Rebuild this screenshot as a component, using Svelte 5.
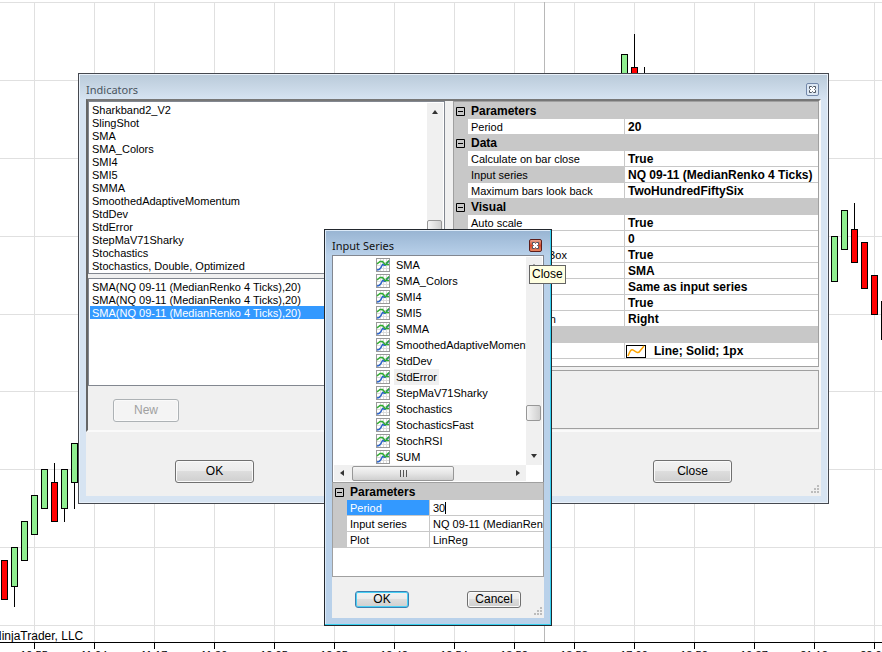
<script lang="ts">
  type Row = { name: string; value?: string; category?: boolean; selected?: boolean; plot?: boolean; edit?: boolean };
  type Candle = { x: number; high: number; top: number; bottom: number; low: number; up: boolean };

  const available = [
    'Sharkband2_V2', 'SlingShot', 'SMA', 'SMA_Colors', 'SMI4', 'SMI5', 'SMMA',
    'SmoothedAdaptiveMomentum', 'StdDev', 'StdError', 'StepMaV71Sharky',
    'Stochastics', 'Stochastics, Double, Optimized'
  ];

  const series = [
    'SMA', 'SMA_Colors', 'SMI4', 'SMI5', 'SMMA', 'SmoothedAdaptiveMomentum', 'StdDev',
    'StdError', 'StepMaV71Sharky', 'Stochastics', 'StochasticsFast', 'StochRSI', 'SUM'
  ];

  const applied = Array(3).fill('SMA(NQ 09-11 (MedianRenko 4 Ticks),20)');

  const indicatorProps: Row[] = [
    { name: 'Parameters', category: true },
    { name: 'Period', value: '20' },
    { name: 'Data', category: true },
    { name: 'Calculate on bar close', value: 'True' },
    { name: 'Input series', value: 'NQ 09-11 (MedianRenko 4 Ticks)', selected: true },
    { name: 'Maximum bars look back', value: 'TwoHundredFiftySix' },
    { name: 'Visual', category: true },
    { name: 'Auto scale', value: 'True' },
    { name: 'Displacement', value: '0' },
    { name: 'Display in Data Box', value: 'True' },
    { name: 'Label', value: 'SMA' },
    { name: 'Panel', value: 'Same as input series' },
    { name: 'Price marker(s)', value: 'True' },
    { name: 'Scale justification', value: 'Right' },
    { name: 'Plots', category: true },
    { name: 'SMA', value: 'Line; Solid; 1px', plot: true }
  ];

  const seriesProps: Row[] = [
    { name: 'Parameters', category: true },
    { name: 'Period', value: '30', selected: true, edit: true },
    { name: 'Input series', value: 'NQ 09-11 (MedianRenko 4 Ticks)' },
    { name: 'Plot', value: 'LinReg' }
  ];

  const times = [
    '10:55', '11:04', '11:17', '11:30', '12:05', '12:25', '12:42', '12:54',
    '13:52', '13:58', '17:00', '18:52', '19:37', '21:12', '22:05'
  ];

  const gridLines = [2, 80, 158, 236, 314, 391, 469, 547, 625];

  const candles: Candle[] = [
    { x: 4, high: 560, top: 560, bottom: 599, low: 599, up: false },
    { x: 14, high: 547, top: 547, bottom: 586, low: 606, up: true },
    { x: 24, high: 521, top: 521, bottom: 560, low: 560, up: true },
    { x: 34, high: 495, top: 495, bottom: 534, low: 534, up: true },
    { x: 44, high: 469, top: 469, bottom: 508, low: 508, up: true },
    { x: 54, high: 463, top: 482, bottom: 521, low: 521, up: false },
    { x: 64, high: 469, top: 469, bottom: 508, low: 521, up: true },
    { x: 74, high: 443, top: 443, bottom: 482, low: 508, up: true },
    { x: 624, high: 54, top: 54, bottom: 93, low: 93, up: true },
    { x: 634, high: 34, top: 67, bottom: 106, low: 106, up: false },
    { x: 644, high: 67, top: 80, bottom: 119, low: 119, up: false },
    { x: 834, high: 236, top: 236, bottom: 281, low: 281, up: true },
    { x: 844, high: 210, top: 210, bottom: 249, low: 249, up: true },
    { x: 854, high: 203, top: 229, bottom: 262, low: 262, up: false },
    { x: 864, high: 242, top: 242, bottom: 288, low: 288, up: false },
    { x: 874, high: 275, top: 275, bottom: 314, low: 314, up: false }
  ];

  let selectedApplied = $state(2);
  let selectedSeries = $state(7);
  let period = $state('30');
</script>

{#snippet closeIcon()}
  <svg width="9" height="9" viewBox="0 0 9 9" aria-hidden="true">
    <path
      d="M1.5 1.5h2l1 1l1-1h2v2l-1 1l1 1v2h-2l-1-1l-1 1h-2v-2l1-1l-1-1z"
      fill="#fff"
      stroke="#4b535e"
    />
  </svg>
{/snippet}

{#snippet grip()}
  <svg class="grip" width="9" height="9" viewBox="0 0 9 9" aria-hidden="true">
    <path d="M7 0h2v2h-2zM4 3h2v2h-2zM7 3h2v2h-2zM1 6h2v2h-2zM4 6h2v2h-2zM7 6h2v2h-2z" fill="#bcbcbc" />
  </svg>
{/snippet}

{#snippet seriesIcon()}
  <svg width="14" height="14" viewBox="0 0 14 14" aria-hidden="true">
    <rect x="0.5" y="0.5" width="13" height="13" fill="#fff" stroke="#999" />
    <path d="M4.5 1v12M7.5 1v12M10.5 1v12M1 4.5h12M1 7.5h12M1 10.5h12" stroke="#dcdcdc" />
    <path d="M1 12L3 11.5L5 9.5L6.5 6.5L9 7.5L13 3" fill="none" stroke="#2a62c9" stroke-width="1.4" />
    <path d="M1 6L4 3.5L6.5 3.5L9 6.5L13 6.5" fill="none" stroke="#2fae2f" stroke-width="1.4" />
    <path d="M10 5.5L13 2.5" stroke="#2fae2f" stroke-width="1.2" />
  </svg>
{/snippet}

{#snippet propertyGrid(rows: Row[])}
  <table>
    <colgroup><col class="gutter-col" /><col class="name-col" /><col /></colgroup>
    <tbody>
      {#each rows as row}
        {#if row.category}
          <tr class="category">
            <td class="gutter">
              <button class="expander" aria-label="Collapse {row.name}">
                <svg width="9" height="9" viewBox="0 0 9 9" aria-hidden="true">
                  <path d="M0.5 0.5h8v8h-8zM2 4.5h5" fill="none" stroke="#000" />
                </svg>
              </button>
            </td>
            <th colspan="2">{row.name}</th>
          </tr>
        {:else}
          <tr class:selected={row.selected}>
            <td class="gutter"></td>
            <td class="name">{row.name}</td>
            <td class="value">
              {#if row.edit}
                <div class="edit">
                  <input aria-label={row.name} bind:value={period} />
                  <span class="caret"></span>
                </div>
              {:else if row.plot}
                <div class="plot">
                  <svg width="20" height="13" viewBox="0 0 20 13" aria-hidden="true">
                    <rect x="0.5" y="0.5" width="19" height="12" fill="#fff" stroke="#000" />
                    <path d="M2 11C4 6 5 4 7 5C10 7 12 9 14 6L18 1" fill="none" stroke="#ffa500" stroke-width="1.5" />
                  </svg>
                  {row.value}
                </div>
              {:else}
                {row.value}
              {/if}
            </td>
          </tr>
        {/if}
      {/each}
    </tbody>
  </table>
{/snippet}

<main class="desktop">
  <!-- Chart -->
  <svg class="chart" width="100%" height="100%" shape-rendering="crispEdges">
    {#each gridLines as y}
      <line x1="0" x2="100%" y1={y + 0.5} y2={y + 0.5} stroke="#e0e0e0" />
    {/each}
    {#each times as _, i}
      <line x1={34.5 + i * 60} x2={34.5 + i * 60} y1="2" y2="642" stroke="#e0e0e0" />
    {/each}
    <line x1="544.5" x2="544.5" y1="2" y2="642" stroke="#b8b8b8" />
    {#each candles as c}
      <line x1={c.x + 0.5} x2={c.x + 0.5} y1={c.high} y2={c.low + 1} stroke="#000" />
      <rect
        x={c.x - 2.5}
        y={c.top + 0.5}
        width="6"
        height={c.bottom - c.top}
        fill={c.up ? '#90ee90' : '#ff0000'}
        stroke="#000"
      />
    {/each}
    <line x1="881.5" x2="881.5" y1="301" y2="340" stroke="#000" />
    <line x1="0" x2="100%" y1="642.5" y2="642.5" stroke="#000" />
    {#each times as time, i}
      <line x1={34.5 + i * 60} x2={34.5 + i * 60} y1="642" y2="649" stroke="#000" />
      <text x={34 + i * 60} y="659" text-anchor="middle">{time}</text>
    {/each}
    <text class="copyright" x="-7" y="640">NinjaTrader, LLC</text>
  </svg>

  <!-- Indicators dialog -->
  <section class="window indicators" aria-label="Indicators">
    <header>
      <h2>Indicators</h2>
      <button class="close-box" aria-label="Close">{@render closeIcon()}</button>
    </header>
    <div class="client">
      <div class="panes">
        <div class="left">
          <div class="list-box">
            <ul role="listbox" aria-label="Available indicators">
              {#each available as name}
                <li role="option" aria-selected="false">{name}</li>
              {/each}
            </ul>
            <div class="scroll-v">
              <i class="arrow up"></i>
              <i class="thumb high"></i>
            </div>
          </div>
          <div class="list-box applied">
            <ul role="listbox" aria-label="Applied indicators">
              {#each applied as name, i}
                <li role="option" aria-selected={selectedApplied === i}>{name}</li>
              {/each}
            </ul>
          </div>
          <button class="btn new" disabled>New</button>
        </div>
        <div class="right">
          <div class="props strong">{@render propertyGrid(indicatorProps)}</div>
          <div class="help"></div>
        </div>
      </div>
      <footer>
        <button class="btn">OK</button>
        <button class="btn">Close</button>
      </footer>
      {@render grip()}
    </div>
  </section>

  <!-- Input Series dialog -->
  <section class="window active series" aria-label="Input Series">
    <header>
      <h2>Input Series</h2>
      <button class="close-box" aria-label="Close">{@render closeIcon()}</button>
    </header>
    <div class="client">
      <div class="tree">
        <div class="tree-body">
          <ul role="listbox" aria-label="Series">
            {#each series as name, i}
              <li role="option" aria-selected={selectedSeries === i}>
                {@render seriesIcon()}
                <span>{name}</span>
              </li>
            {/each}
          </ul>
          <div class="scroll-v">
            <i class="arrow up"></i>
            <i class="thumb low"></i>
            <i class="arrow down"></i>
          </div>
        </div>
        <div class="scroll-h">
          <i class="arrow prev"></i>
          <i class="thumb wide"><b></b><b></b><b></b></i>
          <i class="arrow next"></i>
        </div>
      </div>
      <div class="props">{@render propertyGrid(seriesProps)}</div>
      <footer>
        <button class="btn default">OK</button>
        <button class="btn">Cancel</button>
      </footer>
      {@render grip()}
    </div>
  </section>

  <div class="tooltip" role="tooltip">Close</div>
</main>

<style>
  :global(body) {
    background: #fff;
  }

  .desktop {
    position: relative;
    height: 100vh;
    overflow: hidden;
    font-family: 'Liberation Sans', Arial, sans-serif;
    font-size: 11px;
    line-height: 13px;
    color: #000;
  }

  .desktop * {
    box-sizing: border-box;
  }

  .chart {
    display: block;
  }

  .copyright {
    font-size: 12px;
  }

  ul {
    list-style: none;
    margin: 0;
    padding: 0;
    flex: 1;
    min-width: 0;
    overflow: hidden;
  }

  li {
    white-space: nowrap;
  }

  /* Windows */
  .window {
    position: absolute;
    border: 1px solid #45484f;
    padding: 0 7px 7px;
    background: linear-gradient(#b9cad9, #d7e4f2 26px);
    box-shadow: inset 0 0 0 1px #e9f1fa;
  }

  .indicators {
    left: 78px;
    top: 73px;
    width: 751px;
  }

  .series {
    left: 324px;
    top: 229px;
    width: 228px;
  }

  .active {
    border-color: #23282e;
    background: linear-gradient(#98b4d2, #b9d1ea 26px);
    box-shadow: inset -1px -1px 0 #35d0f0, inset 1px 1px 0 #dceaf8;
  }

  header {
    display: flex;
    align-items: center;
    justify-content: space-between;
    height: 25px;
    padding: 6px 2px 0 0;
  }

  h2 {
    margin: 0;
    font-family: 'Noto Sans', sans-serif;
    font-size: 11px;
    font-weight: 400;
    line-height: 16px;
    color: #4a5560;
  }

  .active h2 {
    color: #111;
  }

  .close-box {
    display: flex;
    align-items: center;
    justify-content: center;
    width: 13px;
    height: 13px;
    padding: 0;
    border: 1px solid #7388aa;
    border-radius: 2px;
    background: #dce7f3;
  }

  .active .close-box {
    border-color: #5c1d1a;
    background: linear-gradient(#eaa58f, #d0492c 50%, #e58562);
  }

  .client {
    position: relative;
    background: #f0f0f0;
  }

  .grip {
    position: absolute;
    right: 2px;
    bottom: 2px;
  }

  /* Indicators panes */
  .panes {
    display: flex;
    gap: 8px;
    border: 2px solid #666;
    border-top-color: #777;
    border-right: 2px solid #fafafa;
    border-bottom: 2px solid #fafafa;
  }

  .left {
    display: flex;
    flex-direction: column;
    width: 357px;
  }

  .right {
    display: flex;
    flex: 1;
    flex-direction: column;
    gap: 3px;
    min-width: 0;
    padding-bottom: 1px;
  }

  .list-box {
    display: flex;
    border: 1px solid #828790;
    padding: 1px;
    background: #fff;
  }

  .list-box li {
    height: 13px;
    padding-left: 2px;
    line-height: 15px;
  }

  .applied {
    min-height: 108px;
    margin-top: 4px;
  }

  .list-box li[aria-selected='true'] {
    background: #3399ff;
    color: #fff;
  }

  .help {
    flex: 1;
    border: 1px solid #a0a0a0;
  }

  /* Scroll bars */
  .scroll-v {
    position: relative;
    display: flex;
    flex-direction: column;
    align-items: center;
    justify-content: space-between;
    width: 16px;
    padding: 7px 0;
    background: #f0f0f0;
  }

  .scroll-h {
    display: flex;
    align-items: center;
    gap: 8px;
    height: 16px;
    margin-right: 16px;
    padding: 0 6px;
    background: #f0f0f0;
  }

  .arrow {
    border: 3px solid transparent;
  }

  .up {
    border-top: 0;
    border-bottom: 4px solid #333;
  }

  .down {
    border-bottom: 0;
    border-top: 4px solid #333;
  }

  .prev {
    border-left: 0;
    border-right: 4px solid #333;
  }

  .next {
    margin-left: auto;
    border-right: 0;
    border-left: 4px solid #333;
  }

  .thumb {
    border: 1px solid #979797;
    border-radius: 2px;
    background: linear-gradient(90deg, #f5f5f5, #e2e2e2 50%, #cfcfcf);
  }

  .high,
  .low {
    position: absolute;
    left: 0;
    width: 15px;
    height: 16px;
  }

  .high {
    top: 69%;
    height: 24px;
  }

  .low {
    top: 71%;
  }

  .wide {
    display: flex;
    align-items: center;
    justify-content: center;
    gap: 2px;
    flex: 0 1 102px;
    height: 15px;
    background: linear-gradient(#f5f5f5, #e5e5e5 50%, #cfcfcf);
  }

  .wide b {
    width: 1px;
    height: 7px;
    background: #555;
  }

  /* Property grid */
  .props {
    border: 1px solid #a0a0a0;
    padding-bottom: 7px;
    background: #fff;
  }

  table {
    width: 100%;
    table-layout: fixed;
    border-spacing: 0;
    border-top: 1px solid #c8c8c8;
  }

  .gutter-col {
    width: 14px;
  }

  .name-col {
    width: 157px;
  }

  .series .name-col {
    width: 83px;
  }

  td,
  th {
    height: 16px;
    padding: 0;
    overflow: hidden;
    line-height: 15px;
    white-space: nowrap;
    text-align: left;
  }

  th {
    padding-left: 3px;
    font-size: 12px;
    font-weight: 700;
  }

  .gutter,
  .category th {
    background: #c8c8c8;
  }

  .gutter {
    line-height: 0;
  }

  .expander {
    display: block;
    margin-left: 2px;
    padding: 0;
    border: 0;
    background: none;
  }

  .expander svg {
    display: block;
  }

  .name,
  .value {
    padding-top: 1px;
    padding-left: 3px;
    border-bottom: 1px solid #c8c8c8;
    line-height: 14px;
  }

  .name {
    border-right: 1px solid #c8c8c8;
  }

  .strong .value {
    font-size: 12px;
    font-weight: 700;
  }

  .strong .selected .name {
    background: #c8c8c8;
  }

  .series .selected .name {
    background: #3399ff;
    color: #fff;
  }

  .plot {
    display: flex;
    align-items: center;
    gap: 8px;
    margin-left: -2px;
  }

  .edit {
    display: flex;
    align-items: center;
  }

  input {
    field-sizing: content;
    height: 14px;
    border: 0;
    padding: 0;
    outline: 0;
    background: none;
    font: inherit;
  }

  .caret {
    width: 1px;
    height: 12px;
    background: #000;
  }

  /* Series tree */
  .tree {
    border: 1px solid #828790;
    border-bottom: 0;
    padding: 1px;
    background: #fff;
  }

  .tree-body {
    display: flex;
  }

  .tree li {
    display: flex;
    align-items: center;
    gap: 4px;
    height: 16px;
    padding-left: 42px;
  }

  .tree li svg {
    flex-shrink: 0;
  }

  .tree li span {
    padding: 0 2px;
    line-height: 16px;
  }

  .tree li[aria-selected='true'] span {
    background: #f0f0f0;
  }

  .series .props {
    padding-bottom: 28px;
  }

  /* Buttons */
  footer {
    display: flex;
    justify-content: space-between;
    padding: 28px 89px 13px;
  }

  .series footer {
    padding: 14px 23px 10px;
  }

  .btn {
    width: 79px;
    height: 23px;
    padding: 0;
    border: 1px solid #707070;
    border-radius: 3px;
    background: linear-gradient(#f2f2f2, #ebebeb 49%, #dddddd 50%, #cfcfcf);
    box-shadow: inset 0 0 0 1px #fafafa;
    font: inherit;
    font-size: 12px;
    color: #000;
  }

  .btn.new {
    width: 66px;
    margin: 13px 0 8px 25px;
    border-color: #adb2b5;
    background: #f4f4f4;
    color: #a0a0a0;
  }

  .series .btn {
    width: 54px;
    height: 17px;
    line-height: 15px;
  }

  .btn.default {
    border-color: #3c7fb1;
    box-shadow: inset 0 0 0 1px #48d0f5;
  }

  .tooltip {
    position: absolute;
    left: 529px;
    top: 265px;
    padding: 2px;
    border: 1px solid #646464;
    background: #ffffe1;
    font-size: 12px;
    line-height: 13px;
  }
</style>
